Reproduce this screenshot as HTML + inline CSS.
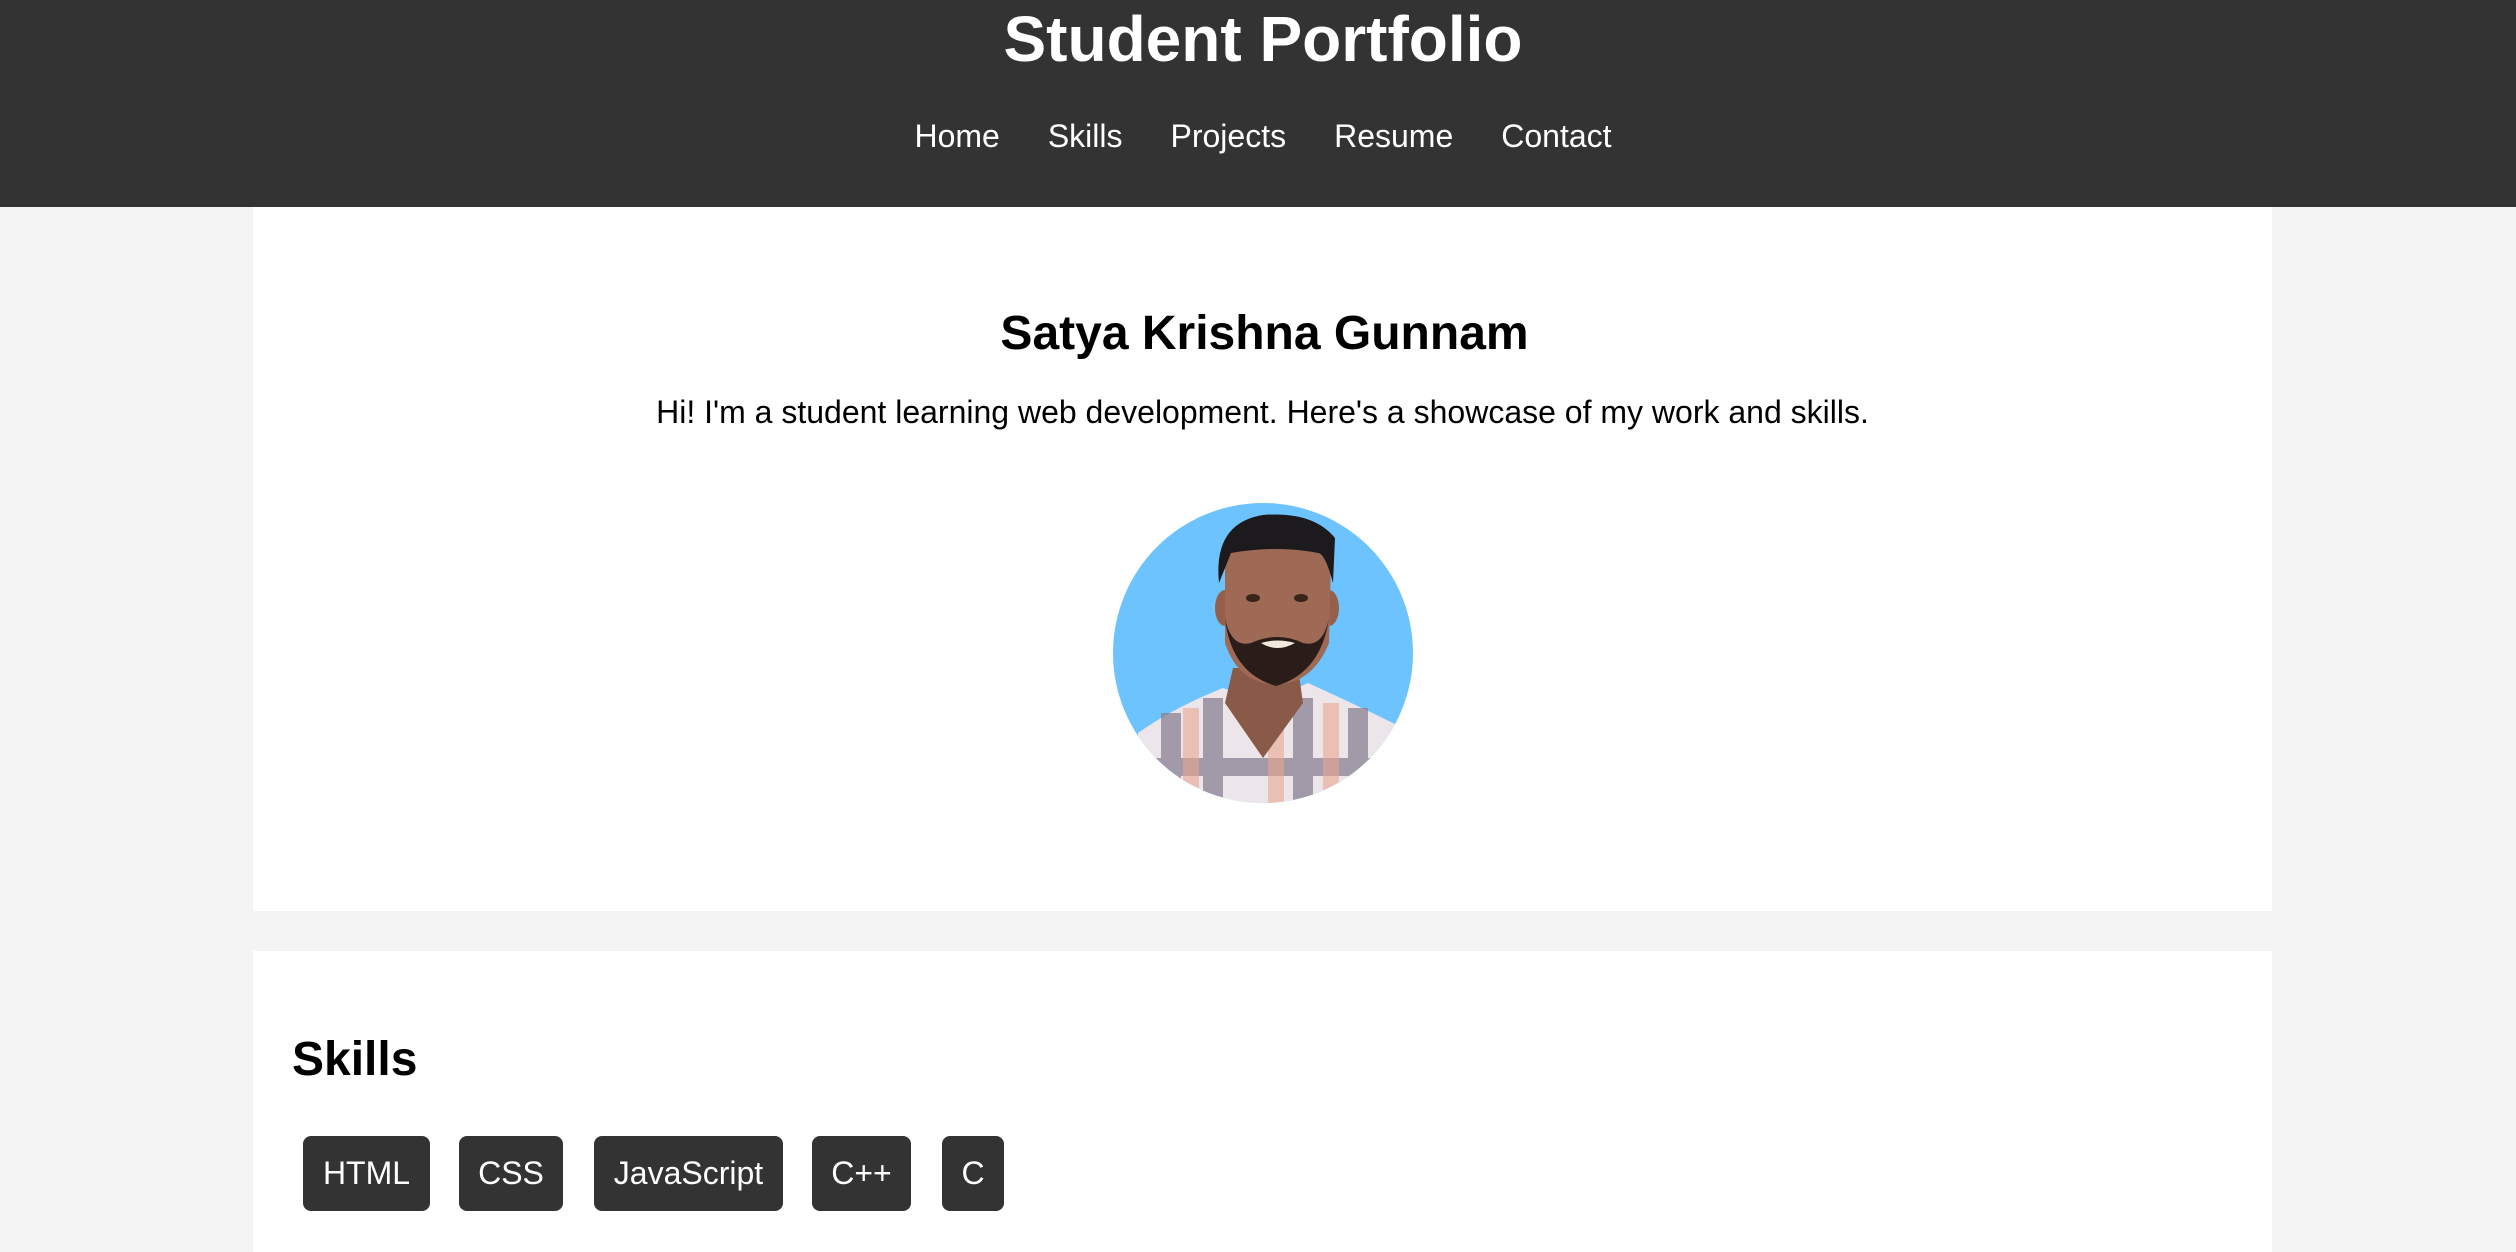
<!DOCTYPE html>
<html><head><meta charset="utf-8"><style>
*{margin:0;padding:0;box-sizing:border-box}
html,body{width:2516px;height:1252px;overflow:hidden}
body{background:#f4f4f4;font-family:"Liberation Sans",Arial,sans-serif;color:#000;position:relative}
header{position:absolute;left:0;top:0;width:2516px;height:207px;background:#333;color:#fff;text-align:center}
header h1{position:absolute;left:5px;width:100%;top:2px;font-size:64px;line-height:74px;font-weight:bold}
nav{position:absolute;top:114px;left:5px;width:100%;text-align:center;font-size:32px;line-height:44px}
nav span{margin:0 24px}
.box{position:absolute;left:253px;width:2019px;background:#fff}
#b1{top:207px;height:704px}
#b2{top:951px;height:301px}
.name{position:absolute;top:302px;left:255px;width:2019px;text-align:center;font-size:48px;font-weight:bold;line-height:64px}
.intro{position:absolute;top:390px;left:253px;width:2019px;text-align:center;font-size:32px;line-height:44px}
.photo{position:absolute;left:1113px;top:503px;width:300px;height:300px;border-radius:50%;overflow:hidden}
.sk{position:absolute;left:292px;top:1028px;font-size:48px;font-weight:bold;line-height:64px}
.badge{position:absolute;top:1136px;height:75px;background:#333;color:#fff;border-radius:8px;font-size:32px;line-height:75px;text-align:center}
</style></head><body>
<header><h1>Student Portfolio</h1>
<nav><span>Home</span><span>Skills</span><span>Projects</span><span>Resume</span><span>Contact</span></nav></header>
<div class="box" id="b1"></div>
<div class="name">Satya Krishna Gunnam</div>
<div class="intro">Hi! I'm a student learning web development. Here's a showcase of my work and skills.</div>
<div class="photo"><svg width="300" height="300" viewBox="0 0 300 300">
<rect width="300" height="300" fill="#6cc3fd"/>
<path d="M25 230 Q60 205 110 185 L150 200 L195 180 Q250 205 290 225 L290 300 L25 300Z" fill="#ece6ea"/>
<g fill="#8a7f93" opacity="0.75">
<rect x="48" y="210" width="20" height="90"/><rect x="90" y="195" width="20" height="105"/><rect x="180" y="195" width="20" height="105"/><rect x="235" y="205" width="20" height="95"/>
<rect x="25" y="255" width="265" height="18"/></g>
<g fill="#eaa590" opacity="0.6"><rect x="70" y="205" width="16" height="95"/><rect x="155" y="210" width="16" height="90"/><rect x="210" y="200" width="16" height="100"/></g>
<path d="M120 165 L185 165 L190 200 L150 255 L112 200Z" fill="#8a5a48"/>
<ellipse cx="112" cy="105" rx="10" ry="18" fill="#95604b"/><ellipse cx="216" cy="105" rx="10" ry="18" fill="#95604b"/>
<path d="M112 60 Q112 25 165 25 Q218 25 218 60 L216 140 Q200 180 163 182 Q125 180 112 140Z" fill="#9e6a55"/>
<path d="M112 115 Q118 170 163 183 Q208 170 216 115 Q210 145 190 140 Q165 128 138 140 Q118 145 112 115Z" fill="#2a1c18"/>
<path d="M148 140 Q164 150 182 140 Q164 135 148 140Z" fill="#f2e8dc"/>
<path d="M106 80 Q100 20 150 12 Q200 8 222 35 L220 80 Q212 50 205 50 Q165 42 118 50 Z" fill="#1c1a1c"/>
<ellipse cx="140" cy="95" rx="7" ry="4" fill="#3a2418"/><ellipse cx="188" cy="95" rx="7" ry="4" fill="#3a2418"/>
</svg></div>
<div class="box" id="b2"></div>
<div class="sk">Skills</div>
<div class="badge" style="left:303px;width:127px">HTML</div>
<div class="badge" style="left:459px;width:104px">CSS</div>
<div class="badge" style="left:594px;width:189px">JavaScript</div>
<div class="badge" style="left:812px;width:99px">C++</div>
<div class="badge" style="left:942px;width:62px">C</div>
</body></html>
